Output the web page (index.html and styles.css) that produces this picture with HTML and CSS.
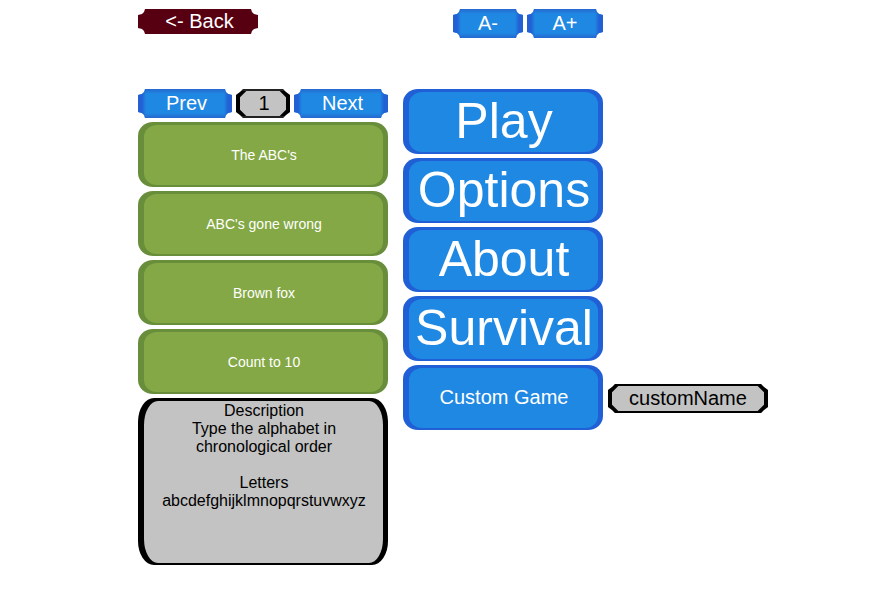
FILE: index.html
```
<!DOCTYPE html>
<html lang="en">
<head>
<meta charset="utf-8">
<title>Level select</title>
<link rel="stylesheet" href="styles.css">
</head>
<body>
<header class="toolbar">
  <button type="button" class="small back">&lt;- Back</button>
  <div class="sizes">
    <button type="button" class="small smaller">A-</button>
    <button type="button" class="small larger">A+</button>
  </div>
</header>
<main class="menu">
  <section class="stack">
    <div class="pager">
      <button type="button" class="small">Prev</button>
      <input class="field page" type="text" value="1" aria-label="Page">
      <button type="button" class="small">Next</button>
    </div>
    <button type="button" class="big level">The ABC's</button>
    <button type="button" class="big level">ABC's gone wrong</button>
    <button type="button" class="big level">Brown fox</button>
    <button type="button" class="big level">Count to 10</button>
    <div class="description">
      <p>Description<br>Type the alphabet in<br>chronological order</p>
      <p>Letters<br>abcdefghijklmnopqrstuvwxyz</p>
    </div>
  </section>
  <nav class="stack">
    <button type="button" class="big">Play</button>
    <button type="button" class="big">Options</button>
    <button type="button" class="big">About</button>
    <button type="button" class="big">Survival</button>
    <div class="custom">
      <button type="button" class="big custom-game">Custom Game</button>
      <input class="field name" type="text" value="customName" aria-label="Custom game name">
    </div>
  </nav>
</main>
</body>
</html>
```
FILE: styles.css
```
* {
  box-sizing: border-box;
}

body {
  margin: 0;
  padding: 9px 20px 40px 138px;
  background: #fff;
  font-family: "Liberation Sans", Arial, sans-serif;
}

button,
input {
  margin: 0;
  font-family: inherit;
}

.toolbar,
.menu {
  display: grid;
  grid-template-columns: 250px 200px;
  column-gap: 15px;
  align-items: start;
}

.toolbar {
  height: 80px;
}

.sizes {
  display: flex;
  justify-content: flex-end;
  gap: 4px;
}

.stack {
  display: flex;
  flex-direction: column;
  gap: 4px;
}

.pager {
  display: grid;
  grid-template-columns: 1fr 54px 1fr;
  gap: 4px;
}

.small {
  height: 29px;
  padding: 0 0 1px 3px;
  border: 0;
  color: #fff;
  font-size: 20px;
  line-height: 24px;
  background:
    linear-gradient(90deg, #2260d4 4px, transparent 8px, transparent calc(100% - 8px), #2260d4 calc(100% - 4px)),
    linear-gradient(#2668cf, #1f88e2 5px, #1f88e2 24px, #2668cf);
  clip-path: polygon(
    0 6px, 4px 5px, 6px 3px, 7px 0,
    calc(100% - 7px) 0, calc(100% - 6px) 3px, calc(100% - 4px) 5px, 100% 6px,
    100% calc(100% - 6px), calc(100% - 4px) calc(100% - 5px), calc(100% - 6px) calc(100% - 3px), calc(100% - 7px) 100%,
    7px 100%, 6px calc(100% - 3px), 4px calc(100% - 5px), 0 calc(100% - 6px));
}

.back {
  width: 120px;
  height: 25px;
  background: #570012;
}

.sizes .small {
  padding-left: 0;
}

.smaller {
  width: 70px;
}

.larger {
  width: 76px;
}

.big {
  position: relative;
  isolation: isolate;
  width: 100%;
  height: 65px;
  padding: 0 0 2px 2px;
  border: 0;
  border-radius: 15px / 14px;
  background: #205fd5;
  color: #fff;
  font-size: 50px;
  line-height: 56px;
  white-space: nowrap;
}

.big::before {
  content: "";
  position: absolute;
  z-index: -1;
  inset: 3px 5px 2px 6px;
  border-radius: 13px / 12px;
  background: #1f88e2;
}

.level {
  padding-bottom: 0;
  background: #698e3b;
  font-size: 14px;
  line-height: 18px;
}

.level::before {
  background: #84a845;
}

.description {
  position: relative;
  isolation: isolate;
  min-height: 167px;
  padding: 4px 4px 0 6px;
  border-radius: 16px / 24px;
  background: #000;
  color: #000;
  font-size: 16px;
  line-height: 18px;
  text-align: center;
}

.description::before {
  content: "";
  position: absolute;
  z-index: -1;
  inset: 3px 5px 2px 6px;
  border-radius: 14px / 24px;
  background: #c3c3c3;
}

.description p {
  margin: 0 0 18px;
}

.custom {
  display: grid;
  grid-template-columns: 200px 160px;
  gap: 5px;
  align-items: center;
}

.custom-game {
  font-size: 20px;
  line-height: 24px;
}

.field {
  width: 100%;
  height: 29px;
  padding: 0;
  border: solid #000;
  border-width: 2px 4px;
  border-radius: 0;
  background:
    linear-gradient(135deg, #000 4px, transparent 5px),
    linear-gradient(225deg, #000 4px, transparent 5px),
    linear-gradient(45deg, #000 4px, transparent 5px),
    linear-gradient(315deg, #000 4px, transparent 5px),
    #c3c3c3;
  color: #000;
  font-size: 20px;
  line-height: 24px;
  text-align: center;
  clip-path: polygon(
    0 6px, 4px 3px, 7px 0,
    calc(100% - 7px) 0, calc(100% - 4px) 3px, 100% 6px,
    100% calc(100% - 6px), calc(100% - 4px) calc(100% - 3px), calc(100% - 7px) 100%,
    7px 100%, 4px calc(100% - 3px), 0 calc(100% - 6px));
}

.name {
  margin-top: 2px;
}

.page {
  padding-left: 2px;
  border-color: #222;
  border-left-color: #000;
  border-right-color: #000;
}
```
